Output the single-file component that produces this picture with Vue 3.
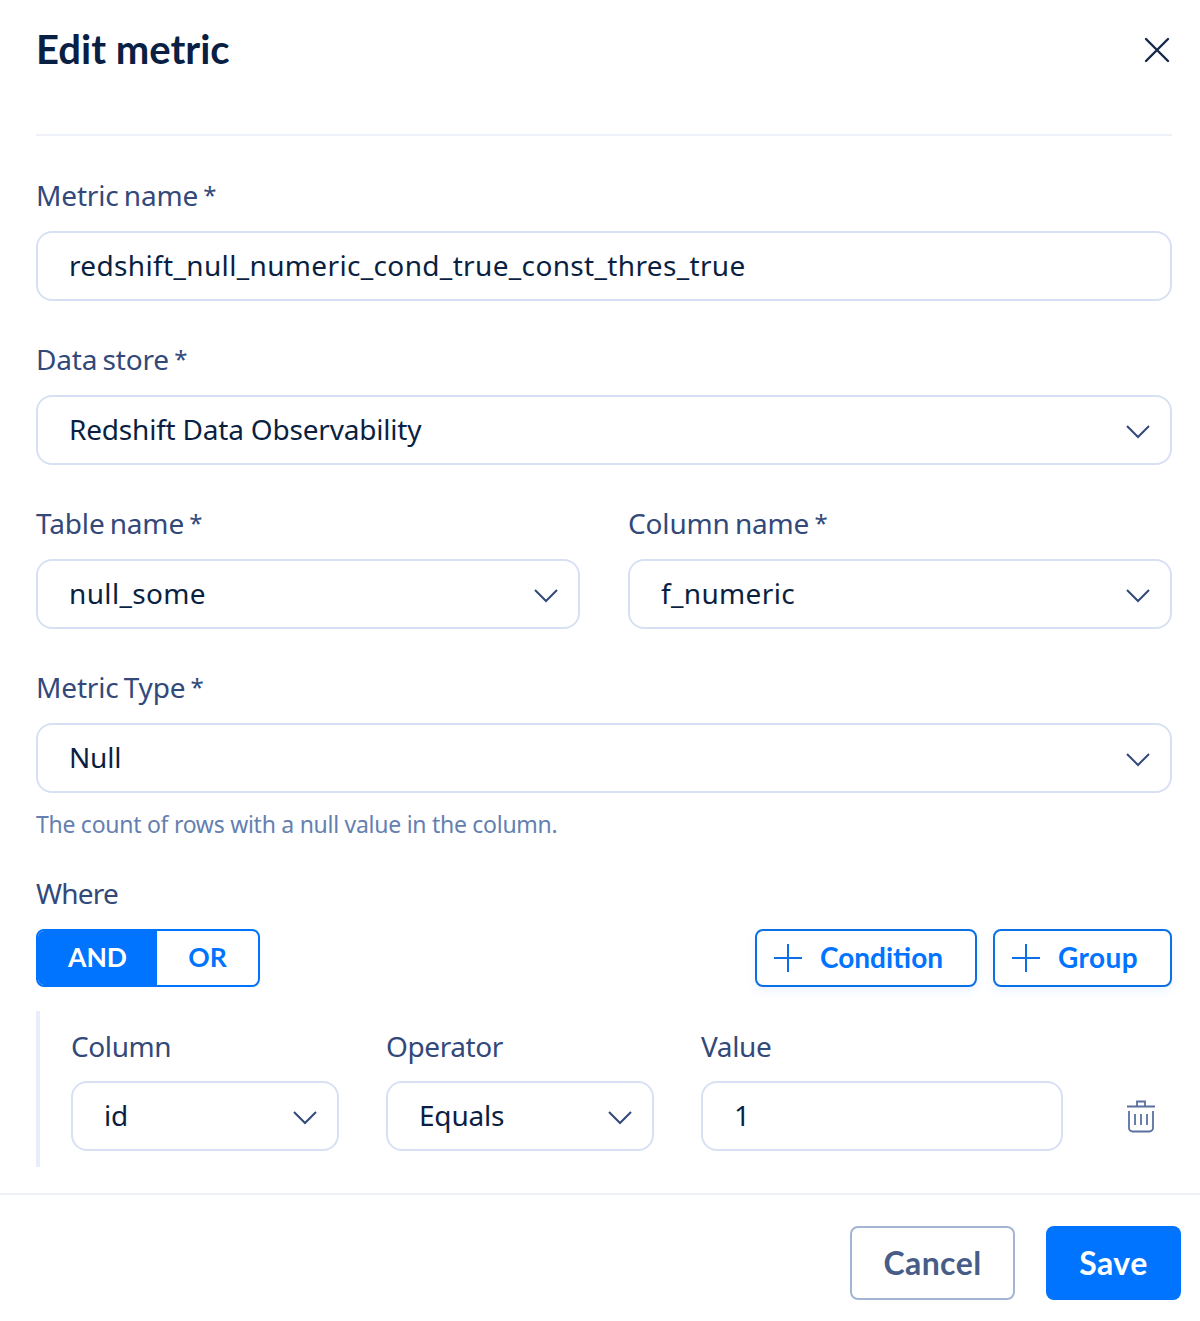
<template>
  <div class="modal">
    <header class="head">
      <h1>Edit metric</h1>
      <button class="close" type="button" aria-label="Close">
        <svg width="26" height="26" viewBox="0 0 26 26"><path d="M2 2l22 22M24 2L2 24" /></svg>
      </button>
    </header>

    <div class="body">
      <div class="field">
        <label>Metric name <span class="req">*</span></label>
        <div class="box snake">redshift_null_numeric_cond_true_const_thres_true</div>
      </div>
      <div class="field">
        <label>Data store <span class="req">*</span></label>
        <div class="box select">Redshift Data Observability<svg class="chev" viewBox="0 0 24 14"><path d="M1 1l11 11L23 1" /></svg></div>
      </div>
      <div class="two">
        <div class="field">
          <label>Table name <span class="req">*</span></label>
          <div class="box select snake">null_some<svg class="chev" viewBox="0 0 24 14"><path d="M1 1l11 11L23 1" /></svg></div>
        </div>
        <div class="field">
          <label>Column name <span class="req">*</span></label>
          <div class="box select snake">f_numeric<svg class="chev" viewBox="0 0 24 14"><path d="M1 1l11 11L23 1" /></svg></div>
        </div>
      </div>
      <div class="field tight">
        <label>Metric Type <span class="req">*</span></label>
        <div class="box select">Null<svg class="chev" viewBox="0 0 24 14"><path d="M1 1l11 11L23 1" /></svg></div>
      </div>
      <p class="help">The count of rows with a null value in the column.</p>

      <label class="where">Where</label>
      <div class="tools">
        <div class="toggle">
          <span class="on">AND</span>
          <span class="off">OR</span>
        </div>
        <div class="adds">
          <button class="add cond" type="button">
            <svg width="30" height="30" viewBox="0 0 30 30"><path d="M15 1v28M1 15h28" /></svg>Condition
          </button>
          <button class="add grp" type="button">
            <svg width="30" height="30" viewBox="0 0 30 30"><path d="M15 1v28M1 15h28" /></svg>Group
          </button>
        </div>
      </div>

      <div class="group">
        <div class="cell col">
          <label>Column</label>
          <div class="box select">id<svg class="chev" viewBox="0 0 24 14"><path d="M1 1l11 11L23 1" /></svg></div>
        </div>
        <div class="cell col">
          <label>Operator</label>
          <div class="box select">Equals<svg class="chev" viewBox="0 0 24 14"><path d="M1 1l11 11L23 1" /></svg></div>
        </div>
        <div class="cell val">
          <label>Value</label>
          <div class="box">1</div>
        </div>
        <svg class="trash" width="30" height="34" viewBox="0 0 30 34">
          <path d="M1 7.500h28M11 7V2.500h8V7M3 12v17a3.500 3.500 0 0 0 3.500 3.500h17A3.500 3.500 0 0 0 27 29V12M9 15v11M15 15v11M21 15v11" />
        </svg>
      </div>
    </div>

    <footer class="foot">
      <button class="btn cancel" type="button">Cancel</button>
      <button class="btn save" type="button">Save</button>
    </footer>
  </div>
</template>

<script setup>
</script>

<style>
html, body {
  margin: 0;
  background: #fff;
}
</style>

<style scoped>
.modal {
  width: 1200px;
  height: 1321px;
  box-sizing: border-box;
  background: #fff;
  font-family: "Noto Sans", "Liberation Sans", sans-serif;
  color: #0b1f42;
}

.head {
  margin: 0 28px 0 36px;
  height: 136px;
  box-sizing: border-box;
  border-bottom: 2px solid #eef1fa;
  display: flex;
  justify-content: space-between;
  align-items: flex-start;
}

.head h1 {
  margin: 0;
  padding-top: 25px;
  font-family: Lato, sans-serif;
  font-size: 40px;
  line-height: 48px;
  font-weight: 700;
  color: #0a1f44;
}

.close {
  border: 0;
  background: none;
  padding: 0;
  margin: 37px 2px 0 0;
  height: 26px;
}

.close path {
  fill: none;
  stroke: #14284b;
  stroke-width: 2.400;
  stroke-linecap: round;
}

.body {
  padding: 40px 28px 0 36px;
}

label {
  display: block;
  font-size: 28px;
  letter-spacing: -0.15px;
  word-spacing: -2px;
  line-height: 38px;
  color: #32497a;
  margin-bottom: 17px;
}

.req {
  font-size: 24px;
  line-height: 0;
  vertical-align: 2px;
}

.field {
  margin-bottom: 39px;
}

.field.tight {
  margin-bottom: 0;
}

.box {
  position: relative;
  box-sizing: border-box;
  height: 70px;
  border: 2px solid #d8e0f3;
  border-radius: 16px;
  padding: 0 31px;
  font-size: 28px;
  letter-spacing: -0.2px;
  line-height: 64px;
  color: #0b1f42;
  background: #fff;
}

.box.snake {
  letter-spacing: 0.35px;
}

.chev {
  position: absolute;
  right: 20px;
  top: 28px;
  width: 24px;
  height: 14px;
}

.chev path {
  fill: none;
  stroke: #32497a;
  stroke-width: 2;
}

.two {
  display: grid;
  grid-template-columns: 544px 544px;
  gap: 48px;
}

.help {
  margin: 14px 0 0;
  font-size: 23px;
  letter-spacing: -0.27px;
  line-height: 34px;
  color: #6480b0;
}

.where {
  margin: 33px 0 17px;
  letter-spacing: -0.8px;
}

.tools {
  display: flex;
  justify-content: space-between;
  height: 58px;
}

.toggle {
  display: flex;
  width: 224px;
  box-sizing: border-box;
  border: 2px solid #0073ff;
  border-radius: 8px;
  overflow: hidden;
  font-family: Lato, sans-serif;
  font-size: 26.500px;
  font-weight: 700;
  line-height: 52px;
  text-align: center;
}

.on {
  width: 119px;
  background: #0073ff;
  color: #fff;
}

.off {
  flex: 1;
  color: #0073ff;
}

.adds {
  display: flex;
  gap: 16px;
}

.add {
  display: flex;
  align-items: center;
  box-sizing: border-box;
  height: 58px;
  border: 2px solid #0b6fe8;
  border-radius: 8px;
  background: #fff;
  color: #0073ff;
  font-family: Lato, sans-serif;
  font-size: 28px;
  font-weight: 700;
  padding: 0 0 2px 16px;
  gap: 17px;
  box-shadow: 0 4px 10px rgba(0, 115, 255, 0.08);
}

.add svg {
  position: relative;
  top: 1px;
}

.add.cond {
  width: 222px;
}

.add.grp {
  width: 179px;
  letter-spacing: 0.4px;
}

.add path {
  fill: none;
  stroke: #0b6fe8;
  stroke-width: 2;
}

.group {
  margin-top: 24px;
  height: 156px;
  box-sizing: border-box;
  border-left: 4px solid #e8edfb;
  padding: 16px 0 0 31px;
  display: flex;
  align-items: flex-start;
  gap: 47px;
  position: relative;
}

.cell label {
  margin-bottom: 16px;
  letter-spacing: -0.4px;
}

.col {
  width: 268px;
}

.val {
  width: 362px;
}

.trash {
  position: absolute;
  right: 16px;
  top: 88px;
}

.trash path {
  fill: none;
  stroke: #5a719f;
  stroke-width: 1.800;
}

.foot {
  margin-top: 26px;
  border-top: 2px solid #eef1fa;
  padding: 31px 19px 0 0;
  display: flex;
  justify-content: flex-end;
  gap: 31px;
}

.btn {
  height: 74px;
  box-sizing: border-box;
  border-radius: 8px;
  padding: 0 0 2px;
  font-family: Lato, sans-serif;
  font-size: 32px;
  font-weight: 700;
  letter-spacing: 0.4px;
}

.cancel {
  width: 165px;
  background: #fff;
  border: 2px solid #a4b5d3;
  color: #475d88;
}

.save {
  width: 135px;
  background: #0073ff;
  border: 0;
  color: #fff;
}
</style>
